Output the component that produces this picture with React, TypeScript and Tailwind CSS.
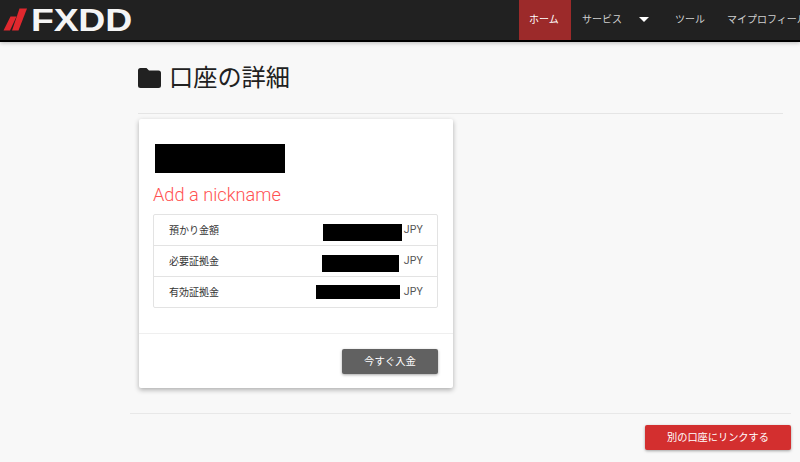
const CJK = "font-['Roboto','Noto_Sans_CJK_JP',sans-serif]";

const NAV = [
  { label: "ホーム", cls: "w-[52px] pl-[10px] bg-[#9c2a2a] text-white" },
  { label: "サービス", cls: "w-[104px] pl-[11px] text-[#d0d0d0]", caret: true },
  { label: "ツール", cls: "w-[52px] text-[#d0d0d0]" },
  { label: "マイプロフィール", cls: "w-[73px] text-[#d0d0d0]" },
];

const ROWS = [
  { label: "預かり金額", bar: "w-[79px] mr-[2px] h-[17px] mt-[5px]" },
  { label: "必要証拠金", bar: "w-[77px] mr-[5px] h-[17px] mt-[5px]" },
  { label: "有効証拠金", bar: "w-[84px] mr-[4px] h-[14px]" },
];

function Header() {
  return (
    <header className="flex h-[42px] shrink-0 items-stretch justify-between overflow-hidden border-b-2 border-black bg-[#212121] shadow-[0_1px_4px_rgba(0,0,0,0.25)]">
      <div className="flex items-center">
        <svg className="ml-[3px] h-[24px] w-[25px]" viewBox="0 0 25 24" aria-hidden="true">
          <path d="M0.5 22.5h6.5L13.5 8.5h-6z" fill="#e0282e" />
          <path d="M9 22.5h6.5L24 0.5h-7.5z" fill="#e0282e" />
        </svg>
        <span className="ml-[3px] origin-left scale-x-[1.17] font-['Liberation_Sans',sans-serif] text-[32px] leading-none font-bold tracking-[-0.2px] text-[#f5f5f5]">
          FXDD
        </span>
      </div>
      <nav className={`flex text-[10px] ${CJK}`}>
        {NAV.map(({ label, cls, caret }) => (
          <div key={label} className={`flex items-center whitespace-nowrap pb-[2px] ${cls}`}>
            <span>{label}</span>
            {caret && <span className="ml-[17px] h-0 w-0 border-x-[5px] border-t-[5px] border-x-transparent border-t-white" />}
          </div>
        ))}
      </nav>
    </header>
  );
}

function BalanceRow({ label, bar }: (typeof ROWS)[number]) {
  return (
    <div className="flex h-[31px] items-center border-b border-[#e3e3e3] pr-[14px] pl-[15px] text-[10px] text-[#333] last:h-[30px] last:border-b-0">
      <span>{label}</span>
      <span className={`ml-auto bg-black ${bar}`} />
      <span className="text-[10.5px] tracking-[0.2px] text-[#555]">JPY</span>
    </div>
  );
}

export default function App() {
  return (
    <div className={`flex h-[462px] w-[800px] flex-col overflow-hidden bg-[#f8f8f8] ${CJK}`}>
      <Header />

      <main className="flex flex-col">
        <div className="mr-[17px] ml-[138px] flex h-[72px] items-center border-b border-[#e5e5e5] pt-[1px]">
          <svg className="mb-[1px] h-[20px] w-[23px] text-[#212121]" viewBox="0 0 23 20" aria-hidden="true">
            <path d="M2.5 0h6l2.5 2.5h9.5A2.5 2.5 0 0 1 23 5v12.5a2.5 2.5 0 0 1-2.5 2.5h-18A2.5 2.5 0 0 1 0 17.5v-15A2.5 2.5 0 0 1 2.5 0z" fill="currentColor" />
          </svg>
          <h1 className="ml-[8px] text-[24.2px] leading-none font-normal text-[#212121]">口座の詳細</h1>
        </div>

        <section className="mt-[5px] ml-[139px] h-[269px] w-[314px] rounded-[2px] bg-white shadow-[0_2px_5px_rgba(0,0,0,0.3)]">
          <div className="h-[214px] pt-[25px] pl-[14px]">
            <div className="ml-[2px] h-[29px] w-[130px] bg-black" />
            <div className="mt-[10px] text-[18.2px] leading-[24px] font-light text-[#ff5252]">Add a nickname</div>
            <div className="mt-[7px] w-[285px] rounded-[2px] border border-[#e3e3e3]">
              {ROWS.map((row) => (
                <BalanceRow key={row.label} {...row} />
              ))}
            </div>
          </div>
          <div className="flex justify-end border-t border-[#efefef] pt-[15px] pr-[15px]">
            <button className="h-[25px] w-[96px] rounded-[2px] bg-[#616161] text-[10.4px] text-white shadow-[0_1px_3px_rgba(0,0,0,0.35)]">
              今すぐ入金
            </button>
          </div>
        </section>

        <div className="mt-[25px] mr-[9px] ml-[130px] flex flex-col items-end border-t border-[#e8e8e8] pt-[11px]">
          <button className="h-[25px] w-[146px] rounded-[2px] bg-[#d32f2f] text-[10.2px] text-white shadow-[0_1px_3px_rgba(0,0,0,0.35)]">
            別の口座にリンクする
          </button>
        </div>
      </main>
    </div>
  );
}
